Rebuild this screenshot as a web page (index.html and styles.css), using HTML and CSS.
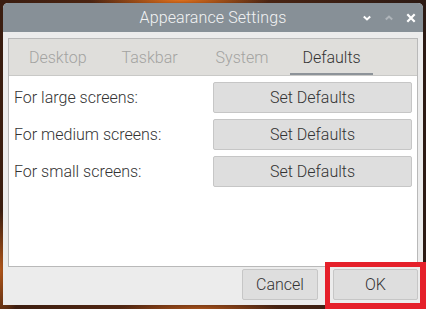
FILE: index.html
```html
<!DOCTYPE html>
<html>
<head>
<meta charset="utf-8">
<link rel="stylesheet" href="styles.css">
</head>
<body>
<div class="window">
  <div class="titlebar">
    <span class="title">Appearance Settings</span>
    <div class="wm-buttons">
      <svg class="wm" viewBox="0 0 10 10" width="10" height="10"><path d="M1.8 3.4 L5 6.4 L8.2 3.4" fill="none" stroke="#ffffff" stroke-width="2"/></svg>
      <svg class="wm" viewBox="0 0 10 10" width="10" height="10"><path d="M1.8 6.6 L5 3.6 L8.2 6.6" fill="none" stroke="#aeb4b9" stroke-width="2"/></svg>
      <svg class="wm" viewBox="0 0 10 10" width="10" height="10"><path d="M1.3 1.3 L8.7 8.7 M8.7 1.3 L1.3 8.7" fill="none" stroke="#ffffff" stroke-width="2.2"/></svg>
    </div>
  </div>
  <div class="body">
    <div class="notebook">
      <div class="tabs">
        <div class="tab">Desktop</div>
        <div class="tab">Taskbar</div>
        <div class="tab">System</div>
        <div class="tab active">Defaults</div>
      </div>
      <div class="page">
        <div class="row"><span class="label">For large screens:</span><button class="btn wide">Set Defaults</button></div>
        <div class="row"><span class="label">For medium screens:</span><button class="btn wide">Set Defaults</button></div>
        <div class="row"><span class="label">For small screens:</span><button class="btn wide">Set Defaults</button></div>
      </div>
    </div>
    <div class="actions">
      <button class="btn cancel">Cancel</button>
      <button class="btn ok">OK</button>
    </div>
  </div>
</div>
<div class="highlight"></div>
</body>
</html>
```
FILE: styles.css
```css
html, body {
  margin: 0;
  padding: 0;
  width: 426px;
  height: 309px;
  overflow: hidden;
}
body {
  font-family: Roboto, "Liberation Sans", sans-serif;
  background:
    radial-gradient(ellipse 90px 10px at 180px 0px, #e0701c 0%, rgba(200,90,20,0) 100%),
    radial-gradient(ellipse 20px 60px at 0px 270px, #b0561a 0%, rgba(160,70,20,0) 100%),
    radial-gradient(ellipse 80px 8px at 200px 309px, #a4501a 0%, rgba(160,70,20,0) 100%),
    linear-gradient(90deg, #3a1d10 0%, #5a2a12 40%, #2c1a14 100%);
  position: relative;
}
.window {
  margin: 3px 0 0 3px;
  width: 420px;
  height: 302px;
  background: #ececec;
  border-radius: 5px 5px 0 0;
  display: flex;
  flex-direction: column;
  overflow: hidden;
}
.titlebar {
  height: 29px;
  background: #879097;
  display: flex;
  align-items: center;
  justify-content: center;
  position: relative;
  flex: none;
}
.title {
  color: #f2f3f4;
  font-size: 16px;
  font-weight: 300;
  letter-spacing: 0.1px;
}
.wm-buttons {
  position: absolute;
  right: 7px;
  top: 10px;
  display: flex;
  gap: 12px;
}
.wm { display: block; }
.body {
  flex: 1;
  display: flex;
  flex-direction: column;
  padding: 6px 5px 5px 5px;
}
.notebook {
  height: 227px;
  border: 1px solid #b9b9b9;
  background: #ffffff;
  display: flex;
  flex-direction: column;
  flex: none;
}
.tabs {
  height: 36px;
  background: #dfdedb;
  border-bottom: 1px solid #c9c9c7;
  display: flex;
  padding-left: 4px;
  flex: none;
}
.tab {
  font-size: 16px;
  color: #a3a3a1;
  font-weight: 300;
  display: flex;
  align-items: center;
  height: 36px;
  box-sizing: border-box;
  margin-right: 3px;
}
.tab:nth-child(1) { padding: 1px 16px 0 16px; }
.tab:nth-child(2) { padding: 1px 18px 0 16px; }
.tab:nth-child(3) { padding: 1px 15px 0 17px; }
.tab.active {
  color: #333333;
  border-bottom: 2px solid #8d9399;
  padding: 3px 12px 0 12px;
  margin-left: 4px;
}
.page {
  padding: 6px 5px;
  display: flex;
  flex-direction: column;
  gap: 6px;
}
.row {
  display: flex;
  align-items: center;
  justify-content: space-between;
}
.label {
  font-size: 16px;
  font-weight: 300;
  color: #333333;
}
.btn {
  font-family: Roboto, "Liberation Sans", sans-serif;
  font-size: 16px;
  font-weight: 300;
  color: #333333;
  background: #dedede;
  border: 1px solid #c6c6c6;
  border-radius: 2px;
  height: 31px;
  padding: 0;
  box-sizing: border-box;
}
.wide { width: 199px; }
.actions {
  display: flex;
  justify-content: flex-end;
  gap: 15px;
  margin-top: 2px;
}
.cancel { width: 76px; }
.ok { width: 85px; }
.highlight {
  position: absolute;
  left: 325px;
  top: 262px;
  width: 101px;
  height: 47px;
  box-sizing: border-box;
  border-style: solid;
  border-color: #e5202a;
  border-width: 5px 6px 6px 5px;
}
```
